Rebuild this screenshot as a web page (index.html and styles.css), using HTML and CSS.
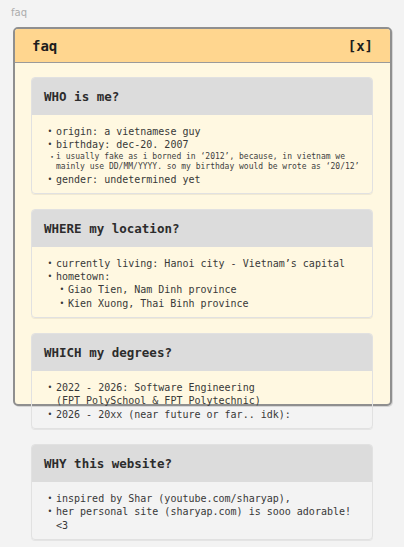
FILE: index.html
```html
<!DOCTYPE html>
<html lang="en">
<head>
<meta charset="utf-8">
<title>faq</title>
<link rel="stylesheet" href="styles.css">
</head>
<body>
<div class="page-label">faq</div>
<div class="window">
  <div class="window-header">
    <span>faq</span>
    <span>[x]</span>
  </div>
  <div class="window-body">
    <section class="card">
      <div class="card-head">WHO is me?</div>
      <ul class="card-body list">
        <li><span>origin: a vietnamese guy</span></li>
        <li><span>birthday: dec-20. 2007</span></li>
        <li class="note-wrap">
          <ul class="list note">
            <li><span>i usually fake as i borned in ‘2012’, because, in vietnam we<br>mainly use DD/MM/YYYY. so my birthday would be wrote as ‘20/12’</span></li>
          </ul>
        </li>
        <li><span>gender: undetermined yet</span></li>
      </ul>
    </section>
    <section class="card">
      <div class="card-head">WHERE my location?</div>
      <ul class="card-body list">
        <li><span>currently living: Hanoi city - Vietnam’s capital</span></li>
        <li><span>hometown:</span></li>
        <li class="note-wrap">
          <ul class="list sub">
            <li><span>Giao Tien, Nam Dinh province</span></li>
            <li><span>Kien Xuong, Thai Binh province</span></li>
          </ul>
        </li>
      </ul>
    </section>
    <section class="card">
      <div class="card-head">WHICH my degrees?</div>
      <ul class="card-body list">
        <li><span>2022 - 2026: Software Engineering<br>(FPT PolySchool &amp; FPT Polytechnic)</span></li>
        <li><span>2026 - 20xx (near future or far.. idk):</span></li>
      </ul>
    </section>
    <section class="card">
      <div class="card-head">WHY this website?</div>
      <ul class="card-body list">
        <li><span>inspired by Shar (youtube.com/sharyap),</span></li>
        <li><span>her personal site (sharyap.com) is sooo adorable! &lt;3</span></li>
      </ul>
    </section>
  </div>
</div>
</body>
</html>
```
FILE: styles.css
```css
html, body {
  margin: 0;
  background: #f3f3f3;
}
body {
  padding: 7px 0 0 13px;
  font-family: "DejaVu Sans Mono", "Liberation Mono", monospace;
}
.page-label {
  font-family: "DejaVu Sans", sans-serif;
  font-size: 10px;
  line-height: 12px;
  color: #acacac;
  margin-left: -2px;
  margin-bottom: 8px;
}
/* the window frame is a fixed-size box drawn behind the content,
   which keeps flowing past its bottom edge */
.window {
  position: relative;
  z-index: 0;
  width: 375px;
  padding: 2px;
}
.window::before {
  content: "";
  position: absolute;
  left: 0;
  top: 0;
  width: 379px;
  height: 379px;
  box-sizing: border-box;
  border: 2px solid #8f8f8f;
  border-radius: 5px;
  background: #fff8e1;
  box-shadow: 1px 1px 0 rgba(0, 0, 0, 0.12);
  z-index: -1;
}
.window-header {
  height: 33px;
  background: #ffd68f;
  border-bottom: 1px solid #9a9a9a;
  border-radius: 3px 3px 0 0;
  display: flex;
  justify-content: space-between;
  align-items: center;
  padding: 0 17px;
  font-weight: bold;
  font-size: 14px;
  color: #1c1c1c;
}
.window-body {
  padding: 14px 17px 0 16px;
}
.card {
  border: 1px solid #e1e1e1;
  border-radius: 4px;
  margin-bottom: 15px;
  box-shadow: 0 1px 0 rgba(0, 0, 0, 0.06);
}
.card-head {
  height: 37px;
  background: #dcdcdc;
  border-radius: 3px 3px 0 0;
  display: flex;
  align-items: center;
  padding: 0 12px;
  font-weight: bold;
  font-size: 12.5px;
  color: #2c2c2c;
}
.list {
  list-style: none;
  margin: 0;
}
.card-body {
  padding: 10px 12px 7px 12px;
  font-size: 10px;
  line-height: 13.3px;
  color: #383838;
}
.list li {
  display: flex;
}
.list li::before {
  content: "•";
  flex: none;
  width: 12px;
  text-align: center;
  font-size: 8px;
}
.list li.note-wrap::before {
  content: none;
}
.list li.note-wrap {
  display: block;
}
.sub {
  padding: 0 0 0 12px;
}
.note {
  padding: 0 0 0 4px;
  font-size: 8px;
  line-height: 10.5px;
  color: #3e3e3e;
}
.note li::before {
  width: 8px;
  font-size: 6px;
}
```
